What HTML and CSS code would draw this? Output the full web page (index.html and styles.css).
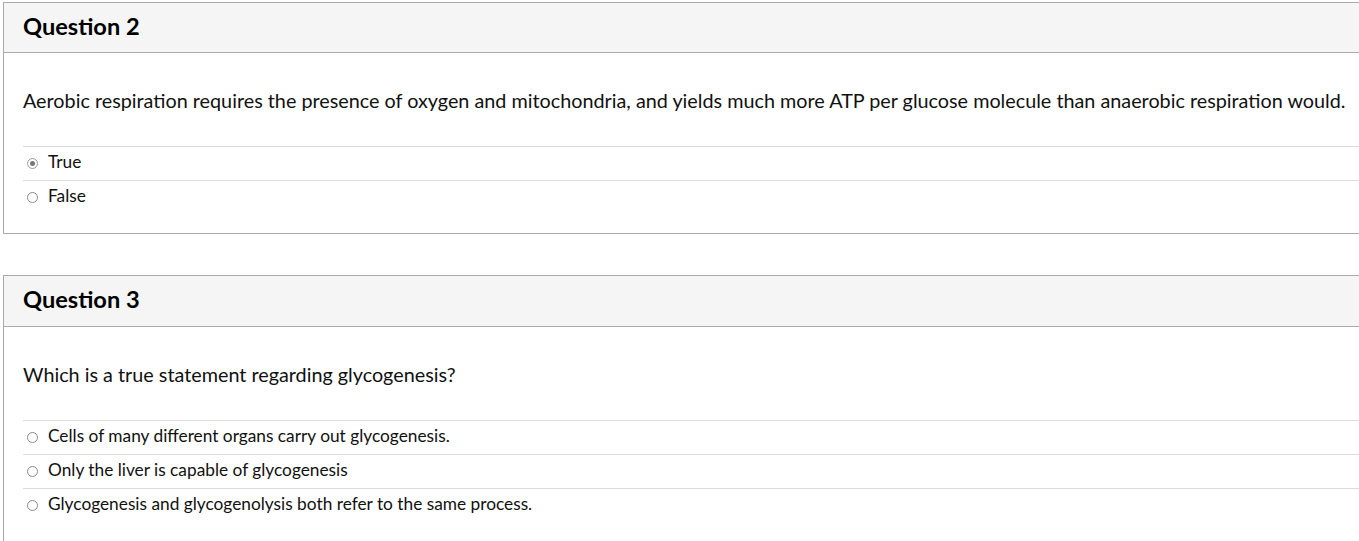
FILE: index.html
```html
<!DOCTYPE html>
<html>
<head>
<meta charset="utf-8">
<link rel="stylesheet" href="styles.css">
</head>
<body>
<div class="page">
  <section class="question">
    <header class="q-header"><h2>Question 2</h2></header>
    <div class="q-body">
      <p class="q-text">Aerobic respiration requires the presence of oxygen and mitochondria, and yields much more ATP per glucose molecule than anaerobic respiration would.</p>
      <ul class="answers">
        <li class="answer"><span class="radio checked"></span><span>True</span></li>
        <li class="answer"><span class="radio"></span><span>False</span></li>
      </ul>
    </div>
  </section>
  <section class="question">
    <header class="q-header"><h2>Question 3</h2></header>
    <div class="q-body">
      <p class="q-text">Which is a true statement regarding glycogenesis?</p>
      <ul class="answers">
        <li class="answer"><span class="radio"></span><span>Cells of many different organs carry out glycogenesis.</span></li>
        <li class="answer"><span class="radio"></span><span>Only the liver is capable of glycogenesis</span></li>
        <li class="answer"><span class="radio"></span><span>Glycogenesis and glycogenolysis both refer to the same process.</span></li>
      </ul>
    </div>
  </section>
</div>
</body>
</html>
```
FILE: styles.css
```css
html, body {
  margin: 0;
  padding: 0;
  background: #fff;
  overflow: hidden;
}
body {
  font-family: Lato, "Noto Sans", sans-serif;
  color: #2d3b45;
}
.page {
  padding: 2px 0 0 3px;
  display: flex;
  flex-direction: column;
  gap: 41px;
}
.question {
  width: 1380px;
  border: 1px solid #aaaaaa;
  box-sizing: border-box;
}
.question + .question .q-header {
  height: 50px;
}
.q-header {
  height: 49px;
  background: #f5f5f5;
  border-bottom: 1px solid #aaaaaa;
  display: flex;
  align-items: center;
  padding-left: 19px;
}
.q-header h2 {
  margin: 0;
  font-size: 23.6px;
  font-weight: 700;
  color: #000;
  line-height: 1;
  position: relative;
  top: -1px;
}
.q-body {
  padding: 35px 0 19px 19px;
}
.q-text {
  margin: 0 0 34px 0;
  font-size: 19.8px;
  line-height: 24px;
  color: #111;
}
.answers {
  list-style: none;
  margin: 0;
  padding: 0;
}
.answer {
  border-top: 1px solid #dddddd;
  display: flex;
  align-items: center;
  font-size: 17.3px;
  line-height: 20px;
  color: #111;
  padding-left: 4px;
  padding-bottom: 3px;
  box-sizing: content-box;
  height: 30px;
  gap: 10px;
}
.radio {
  width: 9px;
  height: 9px;
  border: 1px solid #8a8a8a;
  border-radius: 50%;
  box-sizing: content-box;
  flex: none;
  position: relative;
  top: 1px;
}
.radio.checked {
  border-color: #9a9a9a;
}
.radio.checked::after {
  content: "";
  position: absolute;
  left: 2px;
  top: 2px;
  width: 5px;
  height: 5px;
  border-radius: 50%;
  background: #777;
}
```
